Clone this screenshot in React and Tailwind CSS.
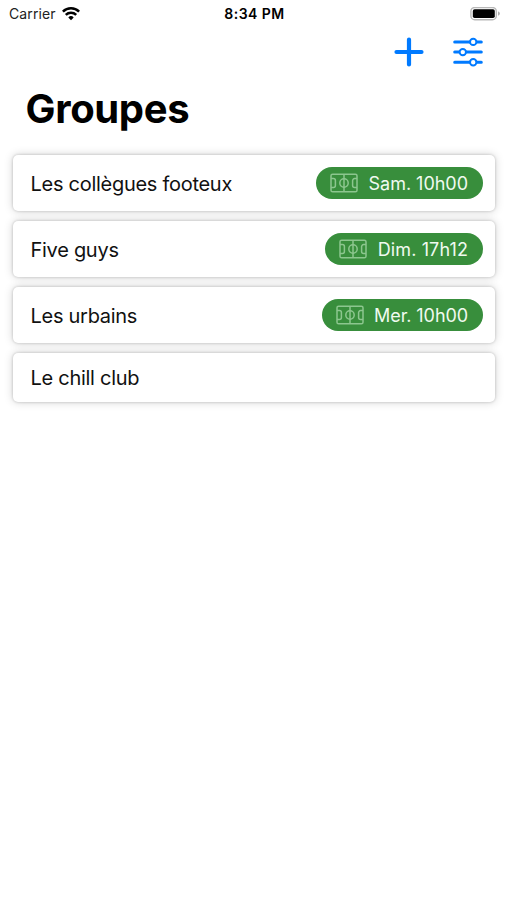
const groups = [
  { name: "Les collègues footeux", slot: "Sam. 10h00", height: "h-14", slotTracking: "tracking-[-0.03px]" },
  { name: "Five guys", slot: "Dim. 17h12", height: "h-14", slotTracking: "tracking-[0.12px]" },
  { name: "Les urbains", slot: "Mer. 10h00", height: "h-14", slotTracking: "tracking-[-0.08px]" },
  { name: "Le chill club", height: "h-[49px]" },
];

function WifiIcon() {
  return (
    <svg width="18" height="14" viewBox="0 0 18 14" fill="none" stroke="#000" strokeWidth="2.5">
      <path d="M0.9 4.6a11.6 11.6 0 0 1 16.2 0" />
      <path d="M3.8 7.9a7.4 7.4 0 0 1 10.4 0" />
      <path d="M9 13.2 6.3 10.4a3.9 3.9 0 0 1 5.4 0Z" fill="#000" stroke="none" />
    </svg>
  );
}

function BatteryIcon() {
  return (
    <svg width="31" height="14" viewBox="0 0 31 14">
      <rect x="0.9" y="0.5" width="25.4" height="12.2" rx="3.8" fill="#fff" stroke="#b8b8b8" strokeWidth="1.4" />
      <rect x="2.8" y="2.2" width="22" height="8.8" rx="1.8" fill="#000" />
      <path d="M28 4.4c1.2.4 1.9 1.2 1.9 2.2s-.7 1.8-1.9 2.2Z" fill="#b0b0b0" />
    </svg>
  );
}

function PlusIcon() {
  return (
    <svg width="30" height="30" viewBox="0 0 30 30" fill="none" stroke="#007aff" strokeWidth="4.2" strokeLinecap="round">
      <path d="M15 2.5v25M2.5 15h25" />
    </svg>
  );
}

function SlidersIcon() {
  return (
    <svg width="30" height="30" viewBox="0 0 30 30" stroke="#007aff" strokeLinecap="round">
      <path d="M1.7 4.9h26.6M1.7 15.1h26.6M1.7 25.3h26.6" strokeWidth="3" />
      <g fill="#fff" strokeWidth="2">
        <circle cx="20.2" cy="4.9" r="3.2" />
        <circle cx="9.8" cy="15.1" r="3.2" />
        <circle cx="20.2" cy="25.3" r="3.2" />
      </g>
    </svg>
  );
}

function PitchIcon() {
  return (
    <svg width="28" height="20" viewBox="0 0 28 20" fill="none" stroke="#8cc68e" strokeWidth="1.5">
      <rect x="1" y="1.2" width="26" height="17.6" rx="1.6" />
      <path d="M14 1v18" />
      <circle cx="14" cy="10" r="4.2" />
      <path d="M1 5.6h2.4a2 2 0 0 1 2 2v4.8a2 2 0 0 1-2 2H1" />
      <path d="M27 5.6h-2.4a2 2 0 0 0-2 2v4.8a2 2 0 0 0 2 2H27" />
    </svg>
  );
}

function GroupCard({ group }) {
  return (
    <li
      className={`flex items-center justify-between rounded-[5px] bg-white pl-[17.5px] pr-[12.5px] shadow-[0_0_3px_rgba(0,0,0,0.2),0_0_10px_rgba(0,0,0,0.18)] ${group.height}`}
    >
      <span className="pt-px text-[20px] leading-6 tracking-[-0.28px] text-[#111]">{group.name}</span>
      {group.slot && (
        <span
          className={`flex h-8 items-center gap-[10.5px] rounded-full bg-[#388e3c] pl-[14px] pr-[14.5px] text-[18px] text-[#f0faf0] ${group.slotTracking}`}
        >
          <PitchIcon />
          {group.slot}
        </span>
      )}
    </li>
  );
}

export default function App() {
  return (
    <div className="h-[900px] w-[507px] overflow-hidden bg-white font-['Inter',sans-serif] text-black">
      <div className="grid h-[27px] grid-cols-3 items-center pl-[8px] pr-[6px]">
        <div className="flex items-center gap-[6px] pl-px">
          <span className="text-[14px] leading-5 tracking-[0.1px] text-[#222]">Carrier</span>
          <WifiIcon />
        </div>
        <span className="text-center text-[14px] font-semibold leading-5 tracking-[0.45px]">8:34 PM</span>
        <div className="flex justify-end">
          <BatteryIcon />
        </div>
      </div>

      <div className="flex h-[50px] items-center justify-end gap-[29px] pr-6">
        <button aria-label="Ajouter">
          <PlusIcon />
        </button>
        <button aria-label="Filtres">
          <SlidersIcon />
        </button>
      </div>

      <h1 className="ml-[25.5px] h-[78px] pt-2 text-[40px] font-bold leading-[48px] tracking-[-0.35px]">Groupes</h1>

      <ul className="ml-[13px] flex w-[482px] flex-col gap-[10px]">
        {groups.map((group) => (
          <GroupCard key={group.name} group={group} />
        ))}
      </ul>
    </div>
  );
}
